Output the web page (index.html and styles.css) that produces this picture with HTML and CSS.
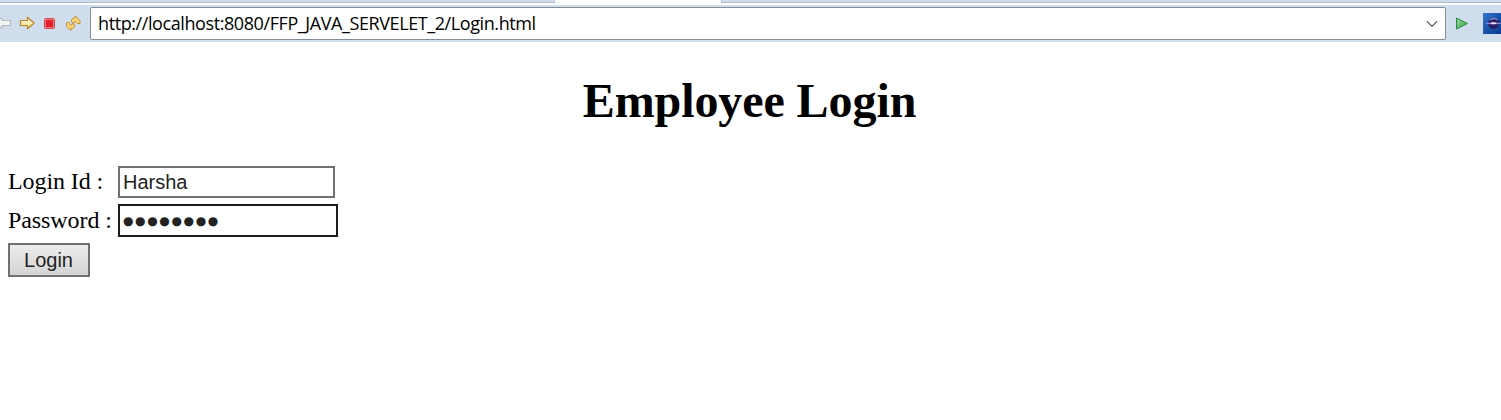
FILE: index.html
```html
<!DOCTYPE html>
<html lang="en">
<head>
<meta charset="utf-8">
<title>Employee Login</title>
<link rel="stylesheet" href="styles.css">
</head>
<body>
<div class="tabs"><div class="tab-left"></div><div class="tab-active"></div><div class="tab-right"></div></div>
<div class="toolbar">
  <svg class="nav-icons" width="90" height="36" viewBox="0 5 90 36">
    <defs>
      <linearGradient id="gold" x1="0" y1="0" x2="0" y2="1"><stop offset="0" stop-color="#fffef0"/><stop offset="1" stop-color="#fbdc7c"/></linearGradient>
    </defs>
    <path d="M-4.500 23 L2 17.500 V20.500 H10.500 V25.500 H2 V28.500 Z" fill="#f4f4f4" stroke="#b5b7bb" stroke-linejoin="round"/>
    <path d="M20.500 20.500 H27.500 V17.300 L34 23 L27.500 28.700 V25.500 H20.500 Z" fill="url(#gold)" stroke="#b98324" stroke-width="1.200" stroke-linejoin="round"/>
    <rect x="44.500" y="18.500" width="10" height="10" rx="1" fill="#ee8d93" stroke="#cf4650"/>
    <rect x="45.800" y="19.800" width="7.400" height="7.400" fill="#e2202c"/>
    <g fill="#fbd875" stroke="#bf8b32" stroke-width=".9" stroke-linejoin="round">
      <path d="M71.500 22 Q71 18 75 18 V15.800 L80 20.500 V23.500 H77.500 L75 21.200 Q73.800 21 74 23.500 Z"/>
      <path d="M74.500 24.500 Q75.500 28.500 71 28.500 V30.500 L66.500 26.500 V22.500 H69 L70.500 25.200 Q72.300 25.500 72 23.500 Z"/>
    </g>
  </svg>
  <div class="address">
    <span class="url">http://localhost:8080/FFP_JAVA_SERVELET_2/Login.html</span>
    <svg class="chevron" width="12" height="8" viewBox="0 0 12 8"><path d="M1 1.300 L6 6.300 L11 1.300" fill="none" stroke="#555" stroke-width="1.200"/></svg>
  </div>
  <svg class="end-icons" width="55" height="36" viewBox="1446 5 55 36">
    <defs>
      <linearGradient id="green" x1="0" y1="0" x2="1" y2="1"><stop offset="0" stop-color="#9bd49b"/><stop offset="1" stop-color="#35a543"/></linearGradient>
      <linearGradient id="sky" x1="0" y1="0" x2="1" y2="1"><stop offset="0" stop-color="#3975cb"/><stop offset=".5" stop-color="#1552a8"/><stop offset="1" stop-color="#0b3b91"/></linearGradient>
    </defs>
    <path d="M1456.500 18 L1467.500 23.500 L1456.500 29 Z" fill="url(#green)" stroke="#278b43" stroke-linejoin="round"/>
    <rect x="1483" y="13" width="20" height="21" fill="url(#sky)"/>
    <circle cx="1493.500" cy="23.500" r="5.500" fill="#292065"/>
    <path d="M1490 19.800 Q1494 17 1497.500 20" fill="none" stroke="#8e87c8" stroke-width="1.500"/>
    <ellipse cx="1493.500" cy="23.300" rx="8" ry=".9" fill="#8f88d4"/>
    <ellipse cx="1493.500" cy="23.300" rx="3" ry="1" fill="#e6d7f6"/>
  </svg>
</div>
<main class="page">
  <h1 class="title">Employee Login</h1>
  <form class="form">
    <div class="row"><label class="label" for="login-id">Login Id :</label><input class="field" id="login-id" type="text" value="Harsha"></div>
    <div class="row row-password"><span class="label">Password :</span><div class="field field-focused">●●●●●●●●</div></div>
    <button class="submit" type="button">Login</button>
  </form>
</main>
</body>
</html>
```
FILE: styles.css
```css
* { box-sizing: border-box; }
body { margin: 0; height: 420px; overflow: hidden; background: #fff; color: #000; font-family: "Liberation Serif", serif; }
.tabs { display: flex; height: 5px; background: #fff; }
.tab-left, .tab-right { height: 3px; background: #cfdceb; border-bottom: 1px solid #aebbd0; }
.tab-left { width: 555px; border-right: 1px solid #aebbd0; }
.tab-active { width: 166px; }
.tab-right { flex: 1; border-left: 1px solid #aebbd0; }
.toolbar { display: flex; height: 37px; background: #cfddec; }
.nav-icons, .end-icons { display: block; flex: none; }
.address { flex: 1; height: 33px; margin-top: 2px; padding: 0 7px; display: flex; align-items: center; justify-content: space-between; background: #fff; border: 1px solid #848b94; border-radius: 2px; }
.url { font: 18px/31px "Open Sans", "Noto Sans", sans-serif; letter-spacing: -0.41px; white-space: nowrap; }
.page { padding: 0 8px; }
.title { margin: 31px 2px 0 0; font-size: 48px; line-height: 55px; letter-spacing: -0.08px; text-align: center; }
.form { padding-top: 38px; }
.row { display: flex; align-items: center; height: 32px; }
.row-password { height: 33px; margin-top: 6px; }
.label { width: 110px; padding-bottom: 2px; font-size: 24px; line-height: 30px; letter-spacing: -0.08px; white-space: nowrap; }
.field { width: 217px; height: 32px; margin: 0; padding: 0 3px; border: 2px solid #707173; border-radius: 0; outline: 0; background: #fff; color: #222; font: 20px/28px "Liberation Sans", sans-serif; }
.field-focused { width: 220px; height: 33px; border-color: #1d1d1f; font: 12px/31px "DejaVu Sans", sans-serif; letter-spacing: 1.65px; }
.submit { display: block; width: 82px; height: 34px; margin-top: 6px; padding: 0 1px 0 0; border: 2px solid #707173; border-radius: 0; background: linear-gradient(#ececec, #d4d4d4); color: #222; font: 20px/28px "Liberation Sans", sans-serif; }
```
